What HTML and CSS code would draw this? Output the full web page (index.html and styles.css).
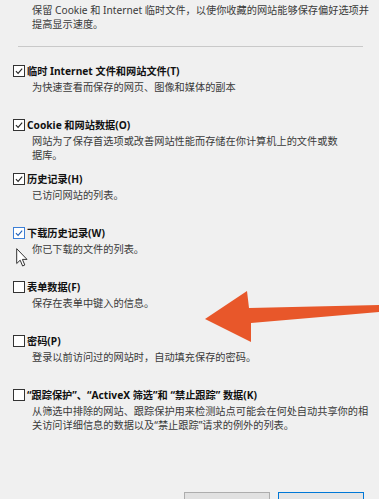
FILE: index.html
```html
<!DOCTYPE html>
<html lang="zh-CN">
<head>
<meta charset="utf-8">
<title>删除浏览历史记录</title>
<link rel="stylesheet" href="styles.css">
</head>
<body>
<div class="dialog">
  <p class="intro">保留 Cookie 和 Internet 临时文件，以使你收藏的网站能够保存偏好选项并<br>提高显示速度。</p>
  <div class="sep"></div>
  <div class="items">
    <div class="item">
      <div class="label"><span class="box"><svg viewBox="0 0 12 12"><path d="M2.3 6.2 L4.9 8.8 L9.8 3.2"/></svg></span>临时 Internet 文件和网站文件(T)</div>
      <p class="desc">为快速查看而保存的网页、图像和媒体的副本</p>
    </div>
    <div class="item">
      <div class="label"><span class="box"><svg viewBox="0 0 12 12"><path d="M2.3 6.2 L4.9 8.8 L9.8 3.2"/></svg></span>Cookie 和网站数据(O)</div>
      <p class="desc">网站为了保存首选项或改善网站性能而存储在你计算机上的文件或数<br>据库。</p>
    </div>
    <div class="item">
      <div class="label"><span class="box"><svg viewBox="0 0 12 12"><path d="M2.3 6.2 L4.9 8.8 L9.8 3.2"/></svg></span>历史记录(H)</div>
      <p class="desc">已访问网站的列表。</p>
    </div>
    <div class="item">
      <div class="label"><span class="box hover"><svg viewBox="0 0 12 12"><path d="M2.3 6.2 L4.9 8.8 L9.8 3.2"/></svg></span>下载历史记录(W)</div>
      <p class="desc">你已下载的文件的列表。</p>
    </div>
    <div class="item">
      <div class="label"><span class="box"></span>表单数据(F)</div>
      <p class="desc">保存在表单中键入的信息。</p>
    </div>
    <div class="item">
      <div class="label"><span class="box"></span>密码(P)</div>
      <p class="desc">登录以前访问过的网站时，自动填充保存的密码。</p>
    </div>
    <div class="item">
      <div class="label"><span class="box"></span>“跟踪保护”、“ActiveX 筛选”和 “禁止跟踪” 数据(K)</div>
      <p class="desc">从筛选中排除的网站、跟踪保护用来检测站点可能会在何处自动共享你的相<br>关访问详细信息的数据以及“禁止跟踪”请求的例外的列表。</p>
    </div>
  </div>
  <div class="buttons">
    <button class="btn" aria-label="删除(D)"></button>
    <button class="btn primary" aria-label="取消"></button>
  </div>

  <svg class="cursor" viewBox="0 0 12 20"><path d="M0.7 0.7 L0.7 15.5 L4.2 12.2 L6.6 18 L8.8 17 L6.4 11.4 L11 11.4 Z"/></svg>
  <svg class="pointer-arrow" viewBox="0 0 174 53"><polygon points="0,29 42,1 44,18 174,15 174,22 46,33 46,52"/></svg>
</div>
</body>
</html>
```

FILE: styles.css
```css
html, body {
  margin: 0;
  padding: 0;
  background: #f0f0f0;
  height: 499px;
  overflow: hidden;
}

.dialog {
  position: relative;
  height: 499px;
  overflow: hidden;
  font-family: "Noto Sans", "Noto Sans CJK SC", sans-serif;
  font-size: 10.2px;
  color: #333;
}

.intro {
  margin: 0;
  padding: 3px 0 0 32px;
  height: 28px;
  line-height: 14px;
  color: #3a3a3a;
  white-space: nowrap;
}

.sep {
  margin: 15px 0 0 18px;
  width: 345px;
  height: 1px;
  background: #c9c9c9;
}

.items {
  margin-top: 16px;
  padding-left: 13px;
}

.item {
  height: 54px;
}

.label {
  display: flex;
  align-items: center;
  gap: 2px;
  height: 16px;
  line-height: 16px;
  font-weight: 700;
  color: #111;
  white-space: nowrap;
}

.box {
  flex: none;
  width: 12px;
  height: 12px;
  box-sizing: border-box;
  border: 1px solid #333;
  background: #fff;
  display: flex;
}

.box svg {
  width: 100%;
  height: 100%;
}

.box path {
  fill: none;
  stroke: #222;
  stroke-width: 1.3;
}

.box.hover {
  border-color: #3c7fd6;
}

.box.hover path {
  stroke: #1e5fb8;
}

.desc {
  margin: 1px 0 0 19px;
  line-height: 14px;
  color: #3a3a3a;
  white-space: nowrap;
}

.buttons {
  display: flex;
  justify-content: flex-end;
  gap: 8px;
  margin-top: 51px;
  padding-right: 15px;
}

.btn {
  width: 86px;
  height: 23px;
  box-sizing: border-box;
  border: 1px solid #adadad;
  background: #e1e1e1;
  padding: 0;
  margin: 0;
}

.btn.primary {
  border-color: #0078d7;
  background: #e5e5e5;
}

.cursor {
  position: absolute;
  left: 16px;
  top: 248px;
  width: 12px;
  height: 20px;
}

.cursor path {
  fill: #fff;
  stroke: #333;
  stroke-width: 1;
  stroke-linejoin: round;
}

.pointer-arrow {
  position: absolute;
  left: 205px;
  top: 290px;
  width: 174px;
  height: 53px;
}

.pointer-arrow polygon {
  fill: #e8572a;
}
```
